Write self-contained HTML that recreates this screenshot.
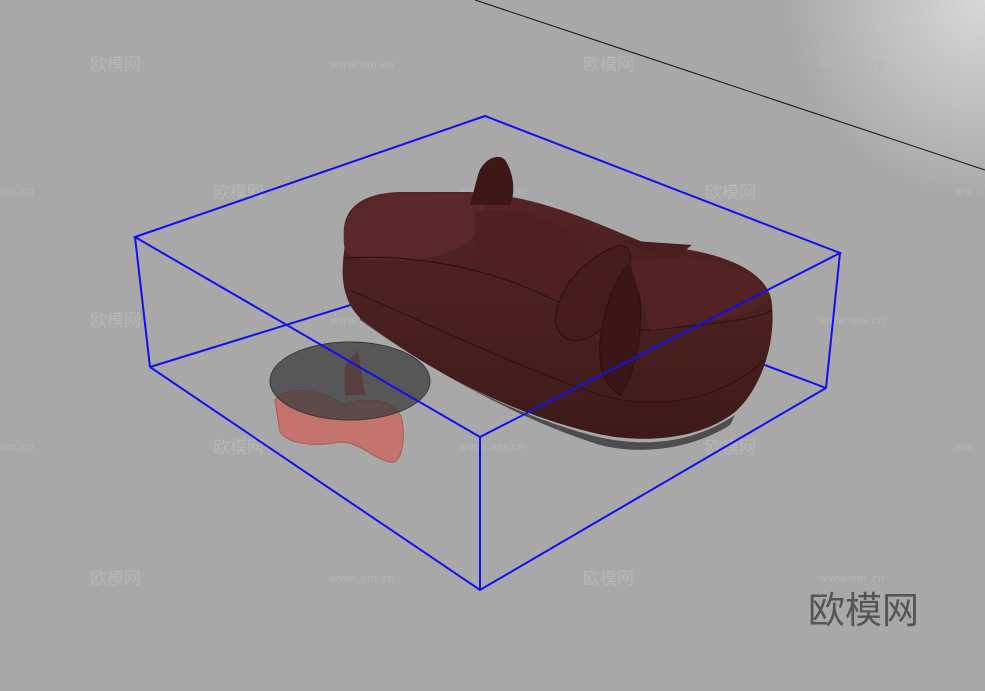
<!DOCTYPE html>
<html><head><meta charset="utf-8"><style>
html,body{margin:0;padding:0;width:985px;height:691px;overflow:hidden;background:#a8a8a8}
svg{display:block}
.wm{font-family:"Liberation Sans","Noto Sans CJK SC",sans-serif;fill:#b6b6b6;font-size:17px}
.ws{font-family:"Liberation Sans",sans-serif;fill:#b4b4b4;font-size:11px;letter-spacing:1px}
</style></head><body>
<svg width="985" height="691" viewBox="0 0 985 691">
<defs>
<radialGradient id="g" cx="985" cy="0" r="200" gradientUnits="userSpaceOnUse">
<stop offset="0" stop-color="#d8d8d8"/><stop offset="1" stop-color="#a8a8a8"/></radialGradient>
<linearGradient id="sf" x1="0" y1="0" x2="0" y2="1"><stop offset="0" stop-color="#552424"/><stop offset="1" stop-color="#3e1a1a"/></linearGradient>
</defs>
<rect width="985" height="691" fill="#a8a8a8"/>
<rect width="985" height="691" fill="url(#g)"/>
<line x1="475" y1="0" x2="985" y2="170" stroke="#111" stroke-width="1"/>
<g>
<text class="wm" x="90" y="70">欧模网</text><text class="ws" x="330" y="68">www.om.cn</text>
<text class="wm" x="583" y="70">欧模网</text><text class="ws" x="820" y="68">www.om.cn</text>
<text class="ws" x="0" y="195">om.cn</text><text class="wm" x="213" y="198">欧模网</text><text class="ws" x="460" y="195">www.om.cn</text><text class="wm" x="705" y="198">欧模网</text><text class="ws" x="955" y="195">ww</text>
<text class="wm" x="90" y="326">欧模网</text><text class="ws" x="330" y="324">www.om.cn</text><text class="wm" x="583" y="326">欧模网</text><text class="ws" x="820" y="324">www.om.cn</text>
<text class="ws" x="0" y="450">om.cn</text><text class="wm" x="213" y="453">欧模网</text><text class="ws" x="460" y="450">www.om.cn</text><text class="wm" x="705" y="453">欧模网</text><text class="ws" x="955" y="450">ww</text>
<text class="wm" x="90" y="584">欧模网</text><text class="ws" x="330" y="582">www.om.cn</text><text class="wm" x="583" y="584">欧模网</text><text class="ws" x="820" y="582">www.om.cn</text>
</g>
<g stroke="#1010f0" stroke-width="2" fill="none">
<polyline points="150,367 490,262 826,388"/>
</g>
<!-- sofa base -->
<path d="M360,320 C430,370 520,420 600,445 C640,455 690,450 730,425 L735,415 C690,445 640,448 590,435 C500,410 420,365 360,315 Z" fill="#4d4d4d"/>
<!-- sofa body -->
<path d="M345,245 C338,210 360,193 400,192 L470,192 C540,195 600,225 650,245 C720,250 770,270 772,305 C776,345 760,390 735,412 C700,440 640,445 590,432 C500,410 420,365 360,318 C342,300 340,275 345,245 Z" fill="url(#sf)"/>
<!-- left arm -->
<path d="M345,250 C338,215 360,195 400,193 L470,194 C490,200 490,215 475,235 C460,255 420,262 380,260 C360,260 348,257 345,250 Z" fill="#5a2828"/>
<path d="M345,258 C400,255 460,262 520,285 C580,310 610,330 650,330 C700,325 760,320 772,310" stroke="#2e1212" stroke-width="1.2" fill="none"/>
<path d="M350,290 C420,320 500,360 600,395 C660,412 720,400 765,360" stroke="#2e1212" stroke-width="1" fill="none"/>
<path d="M470,205 L478,175 C482,160 498,152 505,160 C515,175 515,195 510,205 Z" fill="#3e1717"/>
<path d="M475,212 C520,205 560,220 590,250 L565,300 C520,285 490,272 475,258 Z" fill="#4e2020"/>
<path d="M555,320 C560,280 590,255 620,245 C640,245 630,290 610,320 C590,345 560,350 555,320 Z" fill="#451b1b" stroke="#2a1010"/>
<path d="M600,340 C605,300 620,270 632,262 C645,290 645,360 620,395 C605,385 598,370 600,340 Z" fill="#3c1616" stroke="#2a1010"/>
<path d="M620,240 L692,245 L670,262 Z" fill="#4a1e1e"/>
<path d="M630,262 C680,250 760,262 770,298 C760,315 700,325 650,330 Z" fill="#532222"/>
<!-- coffee table -->
<path d="M275,400 C285,385 320,388 345,405 C365,395 398,400 402,420 C406,445 400,465 390,462 C372,458 360,442 340,442 C318,446 290,446 280,432 Z" fill="#c4746c" stroke="#a85a54"/>
<ellipse cx="350" cy="381" rx="80" ry="39" fill="rgba(60,60,60,0.75)" stroke="#3a3a3a"/>
<path d="M345,365 L358,350 L365,395 L345,395 Z" fill="rgba(90,45,45,0.6)"/>
<g stroke="#1010f0" stroke-width="2" fill="none">
<polygon points="135,237 485,116 840,253 480,437"/>
<line x1="135" y1="237" x2="150" y2="367"/>
<line x1="480" y1="437" x2="480" y2="590"/>
<line x1="840" y1="253" x2="826" y2="388"/>
<polyline points="150,367 480,590 826,388"/>
</g>
<text x="808" y="623" style="font-family:'Liberation Sans','Noto Sans CJK SC',sans-serif;font-size:37px;fill:#555">欧模网</text>
</svg>
</body></html>
